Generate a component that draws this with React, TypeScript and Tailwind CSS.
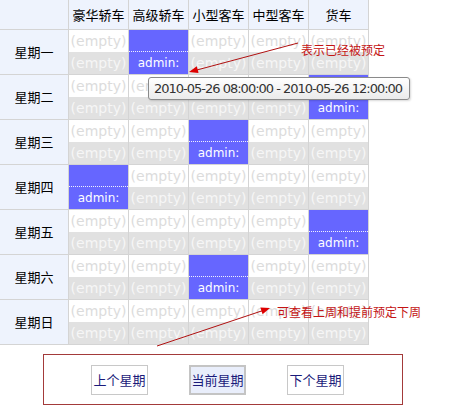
import React from "react";

const columns = ["豪华轿车", "高级轿车", "小型客车", "中型客车", "货车"];

// index of the booked column for each day, -1 = nothing booked
const days: [string, number][] = [
  ["星期一", 1],
  ["星期二", 4],
  ["星期三", 2],
  ["星期四", 0],
  ["星期五", 4],
  ["星期六", 2],
  ["星期日", -1],
];

function arrowHead(tx: number, ty: number, sx: number, sy: number, len = 9, half = 3.5) {
  const dx = sx - tx;
  const dy = sy - ty;
  const m = Math.hypot(dx, dy);
  const ux = dx / m;
  const uy = dy / m;
  const bx = tx + ux * len;
  const by = ty + uy * len;
  return `${tx},${ty} ${bx - uy * half},${by + ux * half} ${bx + uy * half},${by - ux * half}`;
}

function Slot({ booked }: { booked: boolean }) {
  if (booked) {
    return (
      <div className="flex flex-col bg-[#6666ff] font-['DejaVu_Sans',Verdana,sans-serif]">
        <div className="h-[22px] border-b border-dotted border-white/90" />
        <div className="flex h-[22px] items-center justify-center text-[12px] text-white">admin:</div>
      </div>
    );
  }
  return (
    <div className="flex flex-col font-['DejaVu_Sans',Verdana,sans-serif] text-[14px]">
      <div className="flex h-[22px] items-center justify-center bg-white text-[#dcdcdc]">(empty)</div>
      <div className="flex h-[22px] items-center justify-center bg-[#e1e1e1] text-[#f6f6f6]">(empty)</div>
    </div>
  );
}

export default function App() {
  return (
    <div className="relative h-[413px] w-[472px] overflow-hidden bg-white font-['Noto_Sans_CJK_SC','Noto_Sans',sans-serif]">
      <div className="grid w-fit grid-cols-[68px_repeat(5,59px)] grid-rows-[29px_repeat(7,44px)] gap-px bg-[#d4d4d4] pb-px pr-px text-[13px] text-black">
        <div className="bg-[#eef3fd]" />
        {columns.map((c) => (
          <div key={c} className="flex items-center justify-center bg-[#eef3fd]">
            {c}
          </div>
        ))}
        {days.map(([day, booked]) => (
          <React.Fragment key={day}>
            <div className="flex items-center justify-center bg-[#eef3fd]">{day}</div>
            {columns.map((c, i) => (
              <Slot key={c} booked={i === booked} />
            ))}
          </React.Fragment>
        ))}
      </div>

      <div className="ml-[43px] mt-[9px] flex h-[51px] w-[360px] gap-[41px] border border-[#a33a3a] pl-[47px] pt-[10px] text-[13px] text-[#1a1a7a]">
        <button className="h-[30px] w-[57px] border border-[#c8c8c8] bg-white">上个星期</button>
        <button className="h-[30px] w-[57px] border-2 border-[#c4c4c4] bg-[#e9eefb]">当前星期</button>
        <button className="h-[30px] w-[57px] border border-[#c8c8c8] bg-white">下个星期</button>
      </div>

      {/* tooltip */}
      <div className="absolute left-[148px] top-[77px] flex h-[23px] w-[262px] items-center rounded-[3px] border border-[#8a8a8a] bg-linear-to-b from-white to-[#ebebeb] pl-[5px] font-['DejaVu_Sans',Verdana,sans-serif] text-[13px] tracking-[-1px] text-[#333] shadow-[1px_1px_2px_rgba(0,0,0,0.15)]">
        2010-05-26 08:00:00 - 2010-05-26 12:00:00
      </div>

      {/* annotations */}
      <svg className="pointer-events-none absolute left-0 top-0" width={472} height={413}>
        <line x1={298} y1={43} x2={195} y2={70.5} stroke="#b01010" strokeWidth={1} />
        <polygon points={arrowHead(189, 72, 298, 43)} fill="#dd0000" />
        <line x1={157} y1={346} x2={263} y2={310.5} stroke="#b01010" strokeWidth={1} />
        <polygon points={arrowHead(270, 308, 157, 346)} fill="#dd0000" />
      </svg>
      <div className="absolute left-[301px] top-[41px] text-[12px] leading-[18px] text-[#c41414]">表示已经被预定</div>
      <div className="absolute left-[277px] top-[303px] text-[12px] leading-[18px] text-[#c41414]">
        可查看上周和提前预定下周
      </div>
    </div>
  );
}
